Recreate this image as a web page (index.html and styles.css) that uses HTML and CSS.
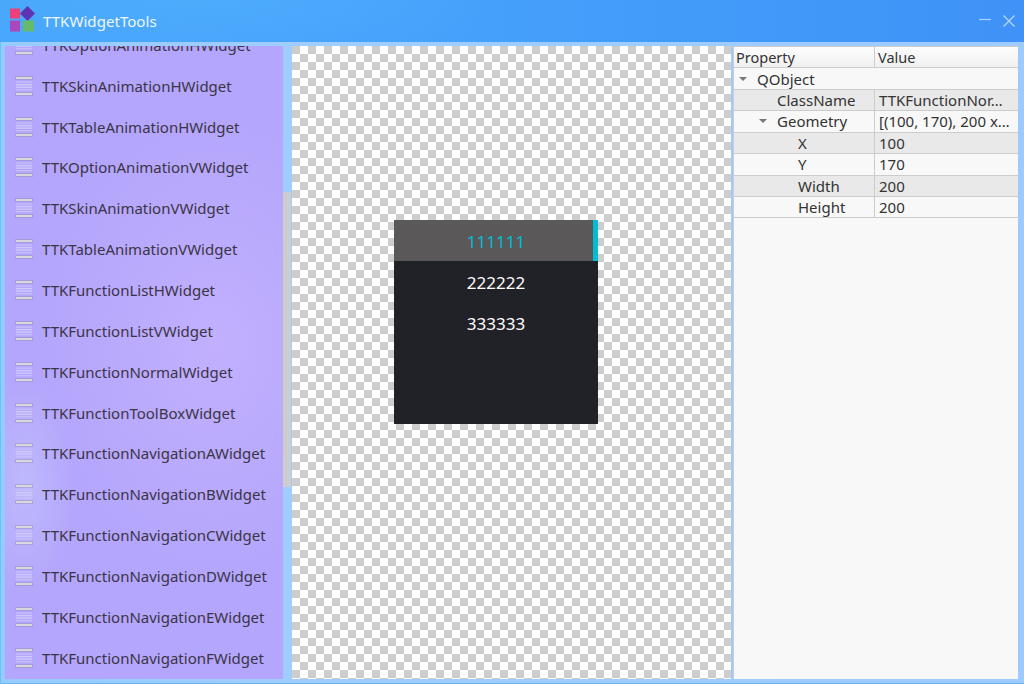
FILE: index.html
```html
<!DOCTYPE html>
<html lang="en">
<head>
<meta charset="utf-8">
<title>TTKWidgetTools</title>
<link rel="stylesheet" href="styles.css">
</head>
<body>
<svg class="defs" width="0" height="0" aria-hidden="true">
  <symbol id="list-icon" viewBox="0 0 18 20">
    <rect x="0" y="0" width="18" height="4" fill="#8f8aa8" opacity=".4"/>
    <rect x="1" y="1" width="16" height="2" fill="#d8d8dc"/>
    <rect x="1" y="5.5" width="16" height="1.3" fill="#c6bffa"/>
    <rect x="1" y="8" width="16" height="1.3" fill="#d0cbfa"/>
    <rect x="1" y="10.5" width="16" height="1.3" fill="#d0cbfa"/>
    <rect x="1" y="13" width="16" height="1.3" fill="#c6bffa"/>
    <rect x="0" y="16" width="18" height="4" fill="#8f8aa8" opacity=".4"/>
    <rect x="1" y="17" width="16" height="2" fill="#d8d8dc"/>
  </symbol>
</svg>
<div class="window">
  <header class="titlebar">
    <svg class="logo" width="24" height="24" viewBox="0 0 24 24" aria-hidden="true">
      <rect x="0" y="0.5" width="10" height="10" fill="#ec407a"/>
      <polygon points="17.5,-2 25,5.5 17.5,13 10,5.5" fill="#5e35b1"/>
      <rect x="0" y="12.5" width="10" height="11" fill="#ab47bc"/>
      <rect x="13" y="12.5" width="11" height="11" fill="#66bb6a"/>
    </svg>
    <span class="title">TTKWidgetTools</span>
    <svg class="winbtns" width="36" height="12" viewBox="0 0 36 12" aria-hidden="true">
      <path d="M0 4.5H12" stroke="#a9d0fb" stroke-width="1.2" fill="none"/>
      <path d="M24.5 0.5L35.5 11.5M35.5 0.5L24.5 11.5" stroke="#b5d6fb" stroke-width="1.3" fill="none"/>
    </svg>
  </header>
  <main class="content">
    <div class="sidebar">
      <ul class="list">
        <li class="item"><svg class="item-icon"><use href="#list-icon"/></svg><span>TTKOptionAnimationHWidget</span></li>
        <li class="item"><svg class="item-icon"><use href="#list-icon"/></svg><span>TTKSkinAnimationHWidget</span></li>
        <li class="item"><svg class="item-icon"><use href="#list-icon"/></svg><span>TTKTableAnimationHWidget</span></li>
        <li class="item"><svg class="item-icon"><use href="#list-icon"/></svg><span>TTKOptionAnimationVWidget</span></li>
        <li class="item"><svg class="item-icon"><use href="#list-icon"/></svg><span>TTKSkinAnimationVWidget</span></li>
        <li class="item"><svg class="item-icon"><use href="#list-icon"/></svg><span>TTKTableAnimationVWidget</span></li>
        <li class="item"><svg class="item-icon"><use href="#list-icon"/></svg><span>TTKFunctionListHWidget</span></li>
        <li class="item"><svg class="item-icon"><use href="#list-icon"/></svg><span>TTKFunctionListVWidget</span></li>
        <li class="item"><svg class="item-icon"><use href="#list-icon"/></svg><span>TTKFunctionNormalWidget</span></li>
        <li class="item"><svg class="item-icon"><use href="#list-icon"/></svg><span>TTKFunctionToolBoxWidget</span></li>
        <li class="item"><svg class="item-icon"><use href="#list-icon"/></svg><span>TTKFunctionNavigationAWidget</span></li>
        <li class="item"><svg class="item-icon"><use href="#list-icon"/></svg><span>TTKFunctionNavigationBWidget</span></li>
        <li class="item"><svg class="item-icon"><use href="#list-icon"/></svg><span>TTKFunctionNavigationCWidget</span></li>
        <li class="item"><svg class="item-icon"><use href="#list-icon"/></svg><span>TTKFunctionNavigationDWidget</span></li>
        <li class="item"><svg class="item-icon"><use href="#list-icon"/></svg><span>TTKFunctionNavigationEWidget</span></li>
        <li class="item"><svg class="item-icon"><use href="#list-icon"/></svg><span>TTKFunctionNavigationFWidget</span></li>
      </ul>
    </div>
    <div class="scrolltrack"><div class="scrollthumb"></div></div>
    <section class="canvas">
      <div class="demo">
        <div class="demo-row demo-row-active">111111</div>
        <div class="demo-row">222222</div>
        <div class="demo-row">333333</div>
      </div>
    </section>
    <section class="props">
      <div class="prop-head">
        <div class="cell-name">Property</div>
        <div class="cell-value">Value</div>
      </div>
      <div class="prop-row">
        <div class="cell-name indent-0 no-divider"><span class="caret"></span>QObject</div>
        <div class="cell-value"></div>
      </div>
      <div class="prop-row alt">
        <div class="cell-name indent-1">ClassName</div>
        <div class="cell-value">TTKFunctionNor…</div>
      </div>
      <div class="prop-row">
        <div class="cell-name indent-0b"><span class="caret"></span>Geometry</div>
        <div class="cell-value">[(100, 170), 200 x…</div>
      </div>
      <div class="prop-row alt">
        <div class="cell-name indent-2">X</div>
        <div class="cell-value">100</div>
      </div>
      <div class="prop-row">
        <div class="cell-name indent-2">Y</div>
        <div class="cell-value">170</div>
      </div>
      <div class="prop-row alt">
        <div class="cell-name indent-2">Width</div>
        <div class="cell-value">200</div>
      </div>
      <div class="prop-row">
        <div class="cell-name indent-2">Height</div>
        <div class="cell-value">200</div>
      </div>
    </section>
  </main>
</div>
</body>
</html>
```
FILE: styles.css
```css
* { box-sizing: border-box; }
html, body { margin: 0; padding: 0; }
body {
  width: 1024px;
  height: 684px;
  overflow: hidden;
  font-family: "Noto Sans", "Open Sans", sans-serif;
}
.defs { position: absolute; }
.window {
  width: 1024px;
  height: 684px;
  display: flex;
  flex-direction: column;
  background: linear-gradient(90deg, #95ccff 0, #a0cdff 30%, #9ecbff 100%);
  border-bottom: 1px solid #6cb2f6;
}
.titlebar {
  height: 42px;
  flex: none;
  display: flex;
  align-items: center;
  padding: 0 9px 0 10px;
  background:
    radial-gradient(ellipse 300px 60px at 200px 0, rgba(90,185,255,.35), transparent),
    linear-gradient(90deg, #48a6fc 0, #46a2fb 40%, #3f92f7 100%);
}
.logo { flex: none; width: 24px; height: 24px; margin-top: -2px; overflow: visible; }
.title {
  margin-left: 9px;
  font-size: 15.1px;
  color: #eef6ff;
}
.winbtns { margin-left: auto; margin-right: 0; margin-top: -1px; }
.content {
  flex: 1;
  min-height: 0;
  display: flex;
  padding: 4px 6px 4px 4px;
  border-left: 1px solid #6cc0ff;
}
.sidebar {
  width: 278px;
  flex: none;
  overflow: hidden;
  background:
    radial-gradient(ellipse 170px 230px at 210px 300px, rgba(200,180,255,.7), transparent),
    radial-gradient(ellipse 50px 110px at 20px 440px, rgba(200,205,255,.5), transparent),
    #b4a6fc;
}
.list {
  list-style: none;
  margin: -21.5px 0 0;
  padding: 0;
}
.item {
  height: 40.85px;
  display: flex;
  align-items: center;
  padding-left: 10px;
  font-size: 15px;
  color: #3a3545;
}
.item-icon {
  width: 18px;
  height: 20px;
  flex: none;
  margin-right: 9px;
  filter: blur(0.35px);
}
.scrolltrack {
  width: 8px;
  flex: none;
  padding-top: 146px;
  margin-right: 1px;
}
.scrollthumb {
  height: 295px;
  background: #cdcdcd;
}
.canvas {
  width: 439px;
  flex: none;
  margin-right: 2px;
  padding: 174px 0 0 102px;
  background-color: #fff;
  background-image: conic-gradient(#fff 25%, #cdcdcd 0 50%, #fff 0 75%, #cdcdcd 0);
  background-size: 16px 16px;
}
.demo {
  width: 204px;
  height: 204px;
  background: #212227;
}
.demo-row {
  height: 41px;
  display: flex;
  align-items: center;
  justify-content: center;
  padding-top: 1px;
  font-size: 17px;
  color: #fff;
}
.demo-row-active {
  background: #5b5859;
  color: #00bcd4;
  border-right: 5px solid #00bcd4;
  padding-left: 5px;
}
.props {
  width: 285px;
  flex: none;
  background: #f8f8f8;
  font-size: 15px;
  color: #333;
  border-top: 1px solid #ccc;
  border-left: 1px solid #ccc;
}
.prop-head, .prop-row {
  display: flex;
  height: 21.45px;
  align-items: stretch;
  border-bottom: 1px solid #ccc;
}
.prop-head {
  height: 21.4px;
  font-size: 14.5px;
  background: linear-gradient(#fdfdfd, #f0f0f0);
}
.cell-name, .cell-value {
  display: flex;
  align-items: center;
  white-space: nowrap;
  overflow: hidden;
}
.cell-name {
  width: 141px;
  padding-left: 2px;
  border-right: 1px solid #ccc;
}
.no-divider { border-right-color: transparent; }
.cell-value { flex: 1; padding-left: 3px; }
.prop-row .cell-value { padding-left: 4px; }
.alt { background: #e9e9e9; }
.indent-0 { padding-left: 5px; }
.indent-0b { padding-left: 25px; }
.indent-1 { padding-left: 43px; }
.indent-2 { padding-left: 64px; }
.caret {
  width: 0;
  height: 0;
  flex: none;
  margin-right: 10px;
  border-left: 4px solid transparent;
  border-right: 4px solid transparent;
  border-top: 4px solid #777;
}
```
